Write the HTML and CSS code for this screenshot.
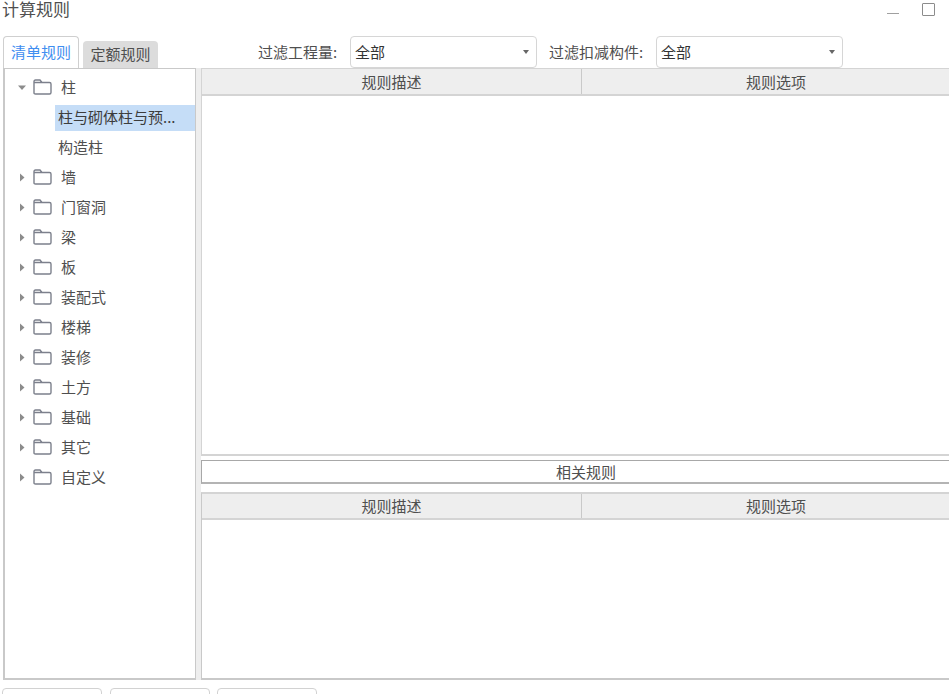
FILE: index.html
```html
<!DOCTYPE html>
<html>
<head>
    <title>计算规则</title>
    <link rel="stylesheet" href="styles.css">
</head>
<body>
    <div class="window">
        <div class="title-bar">
            <span class="title">计算规则</span>
            <div class="window-buttons">
                <span class="btn-min"></span>
                <span class="btn-max"></span>
            </div>
        </div>

        <div class="toolbar">
            <div class="tabs">
                <div class="tab active">清单规则</div>
                <div class="tab">定额规则</div>
            </div>
            <div class="filters">
                <label class="filter-label first">过滤工程量:</label>
                <div class="select"><span>全部</span><i class="caret"></i></div>
                <label class="filter-label second">过滤扣减构件:</label>
                <div class="select"><span>全部</span><i class="caret"></i></div>
            </div>
        </div>

        <div class="main">
            <div class="tree">
                <div class="tree-row">
                    <svg class="arrow" width="9" height="9" viewBox="0 0 9 9"><path d="M0 2.5h8L4 7z" fill="#8c8c8c"/></svg>
                    <svg class="folder" width="19" height="16" viewBox="0 0 19 16"><path d="M1 14V2.5Q1 1 2.5 1H7L9 3.5H16.5Q18 3.5 18 5V13.5Q18 15 16.5 15H2.5Q1 15 1 14ZM1 3.5H9" fill="none" stroke="#7c808c" stroke-width="1.4"/></svg>
                    <span class="node-text">柱</span>
                </div>
                <div class="tree-row child selected">柱与砌体柱与预...</div>
                <div class="tree-row child">构造柱</div>
                <div class="tree-row">
                    <svg class="arrow" width="9" height="9" viewBox="0 0 9 9"><path d="M2 0.5v8L6.5 4.5z" fill="#8c8c8c"/></svg>
                    <svg class="folder" width="19" height="16" viewBox="0 0 19 16"><path d="M1 14V2.5Q1 1 2.5 1H7L9 3.5H16.5Q18 3.5 18 5V13.5Q18 15 16.5 15H2.5Q1 15 1 14ZM1 3.5H9" fill="none" stroke="#7c808c" stroke-width="1.4"/></svg>
                    <span class="node-text">墙</span>
                </div>
                <div class="tree-row">
                    <svg class="arrow" width="9" height="9" viewBox="0 0 9 9"><path d="M2 0.5v8L6.5 4.5z" fill="#8c8c8c"/></svg>
                    <svg class="folder" width="19" height="16" viewBox="0 0 19 16"><path d="M1 14V2.5Q1 1 2.5 1H7L9 3.5H16.5Q18 3.5 18 5V13.5Q18 15 16.5 15H2.5Q1 15 1 14ZM1 3.5H9" fill="none" stroke="#7c808c" stroke-width="1.4"/></svg>
                    <span class="node-text">门窗洞</span>
                </div>
                <div class="tree-row">
                    <svg class="arrow" width="9" height="9" viewBox="0 0 9 9"><path d="M2 0.5v8L6.5 4.5z" fill="#8c8c8c"/></svg>
                    <svg class="folder" width="19" height="16" viewBox="0 0 19 16"><path d="M1 14V2.5Q1 1 2.5 1H7L9 3.5H16.5Q18 3.5 18 5V13.5Q18 15 16.5 15H2.5Q1 15 1 14ZM1 3.5H9" fill="none" stroke="#7c808c" stroke-width="1.4"/></svg>
                    <span class="node-text">梁</span>
                </div>
                <div class="tree-row">
                    <svg class="arrow" width="9" height="9" viewBox="0 0 9 9"><path d="M2 0.5v8L6.5 4.5z" fill="#8c8c8c"/></svg>
                    <svg class="folder" width="19" height="16" viewBox="0 0 19 16"><path d="M1 14V2.5Q1 1 2.5 1H7L9 3.5H16.5Q18 3.5 18 5V13.5Q18 15 16.5 15H2.5Q1 15 1 14ZM1 3.5H9" fill="none" stroke="#7c808c" stroke-width="1.4"/></svg>
                    <span class="node-text">板</span>
                </div>
                <div class="tree-row">
                    <svg class="arrow" width="9" height="9" viewBox="0 0 9 9"><path d="M2 0.5v8L6.5 4.5z" fill="#8c8c8c"/></svg>
                    <svg class="folder" width="19" height="16" viewBox="0 0 19 16"><path d="M1 14V2.5Q1 1 2.5 1H7L9 3.5H16.5Q18 3.5 18 5V13.5Q18 15 16.5 15H2.5Q1 15 1 14ZM1 3.5H9" fill="none" stroke="#7c808c" stroke-width="1.4"/></svg>
                    <span class="node-text">装配式</span>
                </div>
                <div class="tree-row">
                    <svg class="arrow" width="9" height="9" viewBox="0 0 9 9"><path d="M2 0.5v8L6.5 4.5z" fill="#8c8c8c"/></svg>
                    <svg class="folder" width="19" height="16" viewBox="0 0 19 16"><path d="M1 14V2.5Q1 1 2.5 1H7L9 3.5H16.5Q18 3.5 18 5V13.5Q18 15 16.5 15H2.5Q1 15 1 14ZM1 3.5H9" fill="none" stroke="#7c808c" stroke-width="1.4"/></svg>
                    <span class="node-text">楼梯</span>
                </div>
                <div class="tree-row">
                    <svg class="arrow" width="9" height="9" viewBox="0 0 9 9"><path d="M2 0.5v8L6.5 4.5z" fill="#8c8c8c"/></svg>
                    <svg class="folder" width="19" height="16" viewBox="0 0 19 16"><path d="M1 14V2.5Q1 1 2.5 1H7L9 3.5H16.5Q18 3.5 18 5V13.5Q18 15 16.5 15H2.5Q1 15 1 14ZM1 3.5H9" fill="none" stroke="#7c808c" stroke-width="1.4"/></svg>
                    <span class="node-text">装修</span>
                </div>
                <div class="tree-row">
                    <svg class="arrow" width="9" height="9" viewBox="0 0 9 9"><path d="M2 0.5v8L6.5 4.5z" fill="#8c8c8c"/></svg>
                    <svg class="folder" width="19" height="16" viewBox="0 0 19 16"><path d="M1 14V2.5Q1 1 2.5 1H7L9 3.5H16.5Q18 3.5 18 5V13.5Q18 15 16.5 15H2.5Q1 15 1 14ZM1 3.5H9" fill="none" stroke="#7c808c" stroke-width="1.4"/></svg>
                    <span class="node-text">土方</span>
                </div>
                <div class="tree-row">
                    <svg class="arrow" width="9" height="9" viewBox="0 0 9 9"><path d="M2 0.5v8L6.5 4.5z" fill="#8c8c8c"/></svg>
                    <svg class="folder" width="19" height="16" viewBox="0 0 19 16"><path d="M1 14V2.5Q1 1 2.5 1H7L9 3.5H16.5Q18 3.5 18 5V13.5Q18 15 16.5 15H2.5Q1 15 1 14ZM1 3.5H9" fill="none" stroke="#7c808c" stroke-width="1.4"/></svg>
                    <span class="node-text">基础</span>
                </div>
                <div class="tree-row">
                    <svg class="arrow" width="9" height="9" viewBox="0 0 9 9"><path d="M2 0.5v8L6.5 4.5z" fill="#8c8c8c"/></svg>
                    <svg class="folder" width="19" height="16" viewBox="0 0 19 16"><path d="M1 14V2.5Q1 1 2.5 1H7L9 3.5H16.5Q18 3.5 18 5V13.5Q18 15 16.5 15H2.5Q1 15 1 14ZM1 3.5H9" fill="none" stroke="#7c808c" stroke-width="1.4"/></svg>
                    <span class="node-text">其它</span>
                </div>
                <div class="tree-row">
                    <svg class="arrow" width="9" height="9" viewBox="0 0 9 9"><path d="M2 0.5v8L6.5 4.5z" fill="#8c8c8c"/></svg>
                    <svg class="folder" width="19" height="16" viewBox="0 0 19 16"><path d="M1 14V2.5Q1 1 2.5 1H7L9 3.5H16.5Q18 3.5 18 5V13.5Q18 15 16.5 15H2.5Q1 15 1 14ZM1 3.5H9" fill="none" stroke="#7c808c" stroke-width="1.4"/></svg>
                    <span class="node-text">自定义</span>
                </div>
            </div>

            <div class="splitter"></div>

            <div class="right">
                <div class="right-inner">
                    <div class="rule-table top-table">
                        <div class="table-head">
                            <div class="col-desc">规则描述</div>
                            <div class="col-option">规则选项</div>
                        </div>
                    </div>
                    <div class="related">相关规则</div>
                    <div class="rule-table bottom-table">
                        <div class="table-head">
                            <div class="col-desc">规则描述</div>
                            <div class="col-option">规则选项</div>
                        </div>
                    </div>
                </div>
            </div>
        </div>

        <div class="footer">
            <div class="footer-btn"></div>
            <div class="footer-btn"></div>
            <div class="footer-btn last"></div>
        </div>
    </div>
</body>
</html>
```

FILE: styles.css
```css
html, body {
    margin: 0;
    padding: 0;
    background-color: #fff;
}

body {
    color: #4f4f4f;
    font-family: "Noto Sans CJK SC", "Liberation Sans", sans-serif;
    font-size: 15px;
    height: 694px;
    overflow: hidden;
}

.window {
    width: 949px;
    display: flex;
    flex-direction: column;
}

.title-bar {
    height: 36px;
    display: flex;
    justify-content: space-between;
    padding-left: 2px;
}

.title {
    font-family: "Liberation Sans", "Noto Sans CJK SC", sans-serif;
    font-size: 17px;
    line-height: 20px;
    height: 20px;
    margin-top: 1px;
}

.window-buttons {
    display: flex;
    gap: 23px;
    padding: 3px 14px 0 0;
}

.btn-min {
    width: 12px;
    height: 10px;
    border-bottom: 1.5px solid #a0a0a0;
}

.btn-max {
    width: 11px;
    height: 11px;
    border: 1px solid #8c8c8c;
    border-radius: 1px;
}

.toolbar {
    height: 32px;
    display: flex;
}

.tabs {
    width: 258px;
    display: flex;
    align-items: flex-end;
    gap: 4px;
    padding-left: 3px;
    box-sizing: border-box;
}

.tab {
    width: 75px;
    height: 27px;
    line-height: 25px;
    text-align: center;
    background-color: #dcdcdc;
    border-radius: 4px 4px 0 0;
}

.tab.active {
    width: 76px;
    height: 32px;
    line-height: 30px;
    color: #3f8ef0;
    background-color: #fff;
    border: 1px solid #cfcfcf;
    border-bottom: none;
    box-sizing: border-box;
}

.filters {
    display: flex;
    align-items: center;
    height: 32px;
}

.filter-label {
    white-space: nowrap;
    padding-bottom: 2px;
}

.filter-label.first {
    width: 92px;
}

.filter-label.second {
    width: 95px;
    margin: 0 12px;
}

.select {
    width: 187px;
    height: 32px;
    box-sizing: border-box;
    padding: 0 7px 1px 4px;
    display: flex;
    align-items: center;
    justify-content: space-between;
    background-color: #fff;
    border: 1px solid #d6d6d6;
    border-radius: 4px;
    color: #333;
}

.caret {
    width: 0;
    height: 0;
    border-left: 3px solid transparent;
    border-right: 3px solid transparent;
    border-top: 4px solid #666;
}

.main {
    height: 612px;
    display: flex;
}

.tree {
    width: 193px;
    margin-left: 3px;
    box-sizing: border-box;
    padding-top: 6px;
    border: 2px solid #c9c9c9;
    border-width: 1px 1px 2px 2px;
    background-color: #fff;
}

.tree-row {
    height: 26px;
    margin-bottom: 4px;
    box-sizing: border-box;
    display: flex;
    align-items: center;
    padding: 0 0 2px 13px;
    line-height: 24px;
}

.tree-row.child {
    margin-left: 50px;
    padding-left: 3px;
}

.tree-row.selected {
    background-color: #c5ddf7;
    color: #3c3c3c;
}

.arrow {
    flex: none;
}

.folder {
    flex: none;
    margin-left: 6px;
}

.node-text {
    margin-left: 9px;
}

.splitter {
    width: 5px;
    background-color: #eee;
}

.right {
    width: 748px;
    overflow: hidden;
}

/* content is wider than the window, the right side gets cut */
.right-inner {
    width: 769px;
    display: flex;
    flex-direction: column;
}

.rule-table {
    box-sizing: border-box;
    background-color: #fff;
    border: 2px solid #d4d4d4;
    border-width: 1px 0 2px 1px;
}

.top-table {
    height: 388px;
}

.bottom-table {
    height: 188px;
    border-top-width: 2px;
    border-left-color: #c9c9c9;
    border-bottom-color: #c9c9c9;
}

.table-head {
    height: 27px;
    display: flex;
    line-height: 25px;
    text-align: center;
    background-color: #eee;
    border-bottom: 2px solid #d4d4d4;
    box-sizing: border-box;
}

.bottom-table .table-head {
    height: 26px;
    line-height: 23px;
}

.col-desc {
    width: 379px;
    border-right: 1px solid #c9c9c9;
}

.col-option {
    flex: 1;
}

.related {
    height: 24px;
    margin: 4px 0 8px;
    box-sizing: border-box;
    line-height: 21px;
    text-align: center;
    background-color: #fff;
    border: 1px solid #a8a8a8;
    border-right: none;
    border-bottom: 2px solid #b4b4b4;
}

.footer {
    display: flex;
    gap: 8px;
    padding: 8px 0 0 2px;
}

.footer-btn {
    width: 100px;
    height: 30px;
    box-sizing: border-box;
    background-color: #fff;
    border: 1px solid #d2d2d2;
    border-radius: 4px;
}

.footer-btn.last {
    margin-left: -1px;
}
```
